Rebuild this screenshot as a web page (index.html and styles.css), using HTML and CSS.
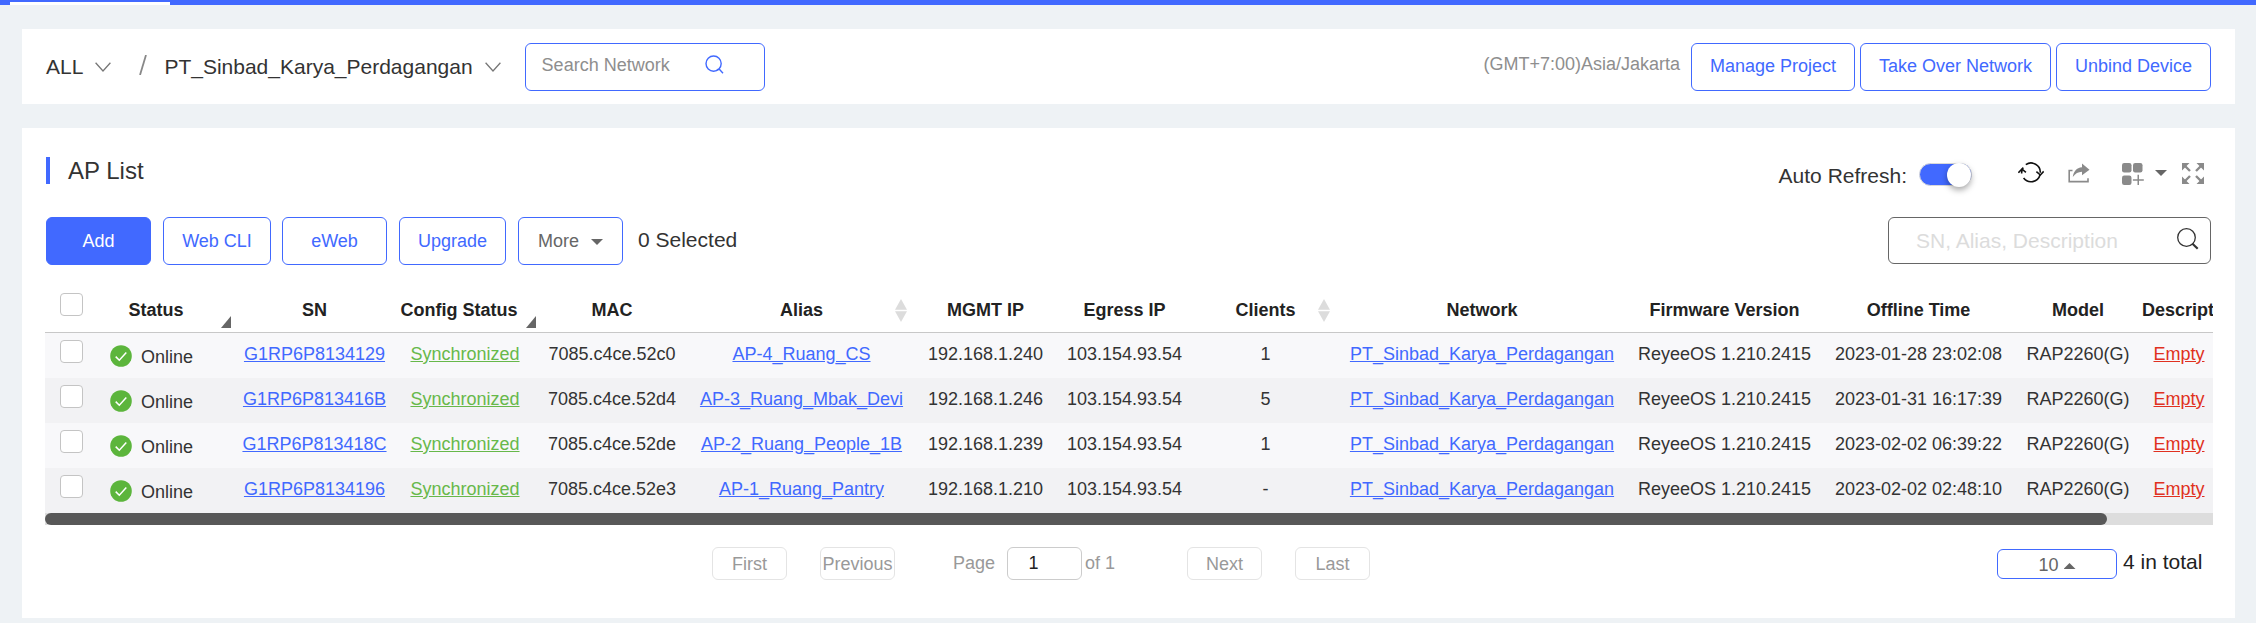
FILE: index.html
```html
<!DOCTYPE html>
<html lang="en">
<head>
<meta charset="utf-8">
<title>AP List</title>
<link rel="stylesheet" href="styles.css">
</head>
<body>
<div class="topbar"><div class="tab"></div></div>
<header class="panel nav">
  <span class="crumb crumb-all">ALL</span>
  <svg class="chev chev-all" viewBox="0 0 16 10"><path d="M.6.8 8 9 15.4.8"/></svg>
  <svg class="slash" viewBox="0 0 8 20"><path d="M7 0 1 20"/></svg>
  <span class="crumb">PT_Sinbad_Karya_Perdagangan</span>
  <svg class="chev chev-net" viewBox="0 0 16 10"><path d="M.6.8 8 9 15.4.8"/></svg>
  <div class="net-search"><span>Search Network</span>
    <svg viewBox="0 0 20 20"><circle cx="8.6" cy="8.6" r="7.6"/><path d="m11.800 14.800 2.600-.6 3.600 4"/></svg>
  </div>
  <div class="nav-right">
    <span class="tz">(GMT+7:00)Asia/Jakarta</span>
    <button class="btn w164">Manage Project</button>
    <button class="btn w191">Take Over Network</button>
    <button class="btn w155">Unbind Device</button>
  </div>
</header>
<main class="panel main">
  <div class="title-row">
    <i class="accent"></i><h1>AP List</h1>
    <div class="tools">
      <span class="auto">Auto Refresh:</span>
      <span class="toggle"><i></i></span>
      <svg class="ic-refresh" viewBox="0 0 26 21"><path d="M3.700 11.500A9.300 9.300 0 0 1 5.200 5.500M7.800 2.600A9.300 9.300 0 0 1 22.300 10.800M22 13A9.300 9.300 0 0 1 5.600 16"/><path d="M.4 10.800 3.900 7l4 3.400M18.400 9.600l4 3.400L25.700 9.400"/></svg>
      <svg class="ic-share" viewBox="0 0 22 20"><path class="line" d="M4.500 7.500H1.200V18.600H20V15.200"/><path d="M14 .5 21.500 6.800 14 12.300V8.800C10 9 7.500 10.500 4.800 14 5.500 8.500 8.500 4.600 14 4.200Z"/></svg>
      <svg class="ic-grid" viewBox="0 0 22 22"><rect width="9.500" height="9.500" rx="2.200"/><rect x="11" width="9.500" height="9.500" rx="2.200"/><rect y="12.500" width="9.500" height="9.500" rx="2.200"/><path d="M15.500 11.800h1.500v4.500h4.800v1.500h-4.800v4.400h-1.500v-4.400h-4.600v-1.500h4.600z"/></svg>
      <i class="caret caret-tools"></i>
      <svg class="ic-expand" viewBox="0 0 22 21"><path d="M0 0h7.500L0 7.500zM22 0v7.500L14.500 0zM0 21v-7.500L7.500 21zM22 21h-7.500L22 13.500z"/><path class="line" d="m2 2 6 6M20 2l-6 6M2 19l6-6M20 19l-6-6"/></svg>
    </div>
  </div>
  <div class="actions">
    <button class="btn primary w105">Add</button>
    <button class="btn w108">Web CLI</button>
    <button class="btn w105">eWeb</button>
    <button class="btn w107">Upgrade</button>
    <button class="btn more w105">More<i class="caret"></i></button>
    <span class="selected">0 Selected</span>
    <div class="search"><span>SN, Alias, Description</span>
      <svg viewBox="0 0 22 22"><circle cx="9.500" cy="9.500" r="8.800"/><path class="handle" d="m15.500 15.800 5.200 5"/></svg>
    </div>
  </div>
  <div class="table-wrap">
    <table class="grid">
      <colgroup><col class="c40"><col class="c146"><col class="c167"><col class="c138"><col class="c152"><col class="c227"><col class="c141"><col class="c137"><col class="c145"><col class="c288"><col class="c197"><col class="c191"><col class="c128"><col class="c74"></colgroup>
      <thead><tr>
        <th><i class="check"></i></th>
        <th class="st">Status<i class="filter"></i></th>
        <th>SN</th>
        <th class="cfg">Config Status<i class="filter"></i></th>
        <th>MAC</th>
        <th>Alias<i class="sort"></i></th>
        <th>MGMT IP</th><th>Egress IP</th>
        <th>Clients<i class="sort"></i></th>
        <th>Network</th><th>Firmware Version</th><th>Offline Time</th><th>Model</th><th class="desc">Description</th>
      </tr></thead>
      <tbody>
        <tr><td><i class="check"></i></td><td><div class="status"><svg viewBox="0 0 22 22"><circle cx="11" cy="11" r="10.800"/><path d="m5.700 11.600 3.600 3.600 7-7.600"/></svg>Online</div></td><td><a>G1RP6P8134129</a></td><td class="sync"><a class="ok">Synchronized</a></td><td>7085.c4ce.52c0</td><td><a>AP-4_Ruang_CS</a></td><td>192.168.1.240</td><td>103.154.93.54</td><td>1</td><td><a>PT_Sinbad_Karya_Perdagangan</a></td><td>ReyeeOS 1.210.2415</td><td>2023-01-28 23:02:08</td><td>RAP2260(G)</td><td><a class="empty">Empty</a></td></tr>
        <tr><td><i class="check"></i></td><td><div class="status"><svg viewBox="0 0 22 22"><circle cx="11" cy="11" r="10.800"/><path d="m5.700 11.600 3.600 3.600 7-7.600"/></svg>Online</div></td><td><a>G1RP6P813416B</a></td><td class="sync"><a class="ok">Synchronized</a></td><td>7085.c4ce.52d4</td><td><a>AP-3_Ruang_Mbak_Devi</a></td><td>192.168.1.246</td><td>103.154.93.54</td><td>5</td><td><a>PT_Sinbad_Karya_Perdagangan</a></td><td>ReyeeOS 1.210.2415</td><td>2023-01-31 16:17:39</td><td>RAP2260(G)</td><td><a class="empty">Empty</a></td></tr>
        <tr><td><i class="check"></i></td><td><div class="status"><svg viewBox="0 0 22 22"><circle cx="11" cy="11" r="10.800"/><path d="m5.700 11.600 3.600 3.600 7-7.600"/></svg>Online</div></td><td><a>G1RP6P813418C</a></td><td class="sync"><a class="ok">Synchronized</a></td><td>7085.c4ce.52de</td><td><a>AP-2_Ruang_People_1B</a></td><td>192.168.1.239</td><td>103.154.93.54</td><td>1</td><td><a>PT_Sinbad_Karya_Perdagangan</a></td><td>ReyeeOS 1.210.2415</td><td>2023-02-02 06:39:22</td><td>RAP2260(G)</td><td><a class="empty">Empty</a></td></tr>
        <tr><td><i class="check"></i></td><td><div class="status"><svg viewBox="0 0 22 22"><circle cx="11" cy="11" r="10.800"/><path d="m5.700 11.600 3.600 3.600 7-7.600"/></svg>Online</div></td><td><a>G1RP6P8134196</a></td><td class="sync"><a class="ok">Synchronized</a></td><td>7085.c4ce.52e3</td><td><a>AP-1_Ruang_Pantry</a></td><td>192.168.1.210</td><td>103.154.93.54</td><td>-</td><td><a>PT_Sinbad_Karya_Perdagangan</a></td><td>ReyeeOS 1.210.2415</td><td>2023-02-02 02:48:10</td><td>RAP2260(G)</td><td><a class="empty">Empty</a></td></tr>
      </tbody>
    </table>
    <div class="track"><div class="thumb"></div></div>
  </div>
  <footer class="pager">
    <span class="pg">First</span>
    <span class="pg pg-prev">Previous</span>
    <span class="label">Page</span>
    <span class="pg-input">1</span>
    <span class="of">of 1</span>
    <span class="pg pg-next">Next</span>
    <span class="pg pg-last">Last</span>
    <span class="size">10<i class="caret up"></i></span>
    <span class="total">4 in total</span>
  </footer>
</main>
</body>
</html>
```
FILE: styles.css
```css
* { box-sizing: border-box; }
body {
  margin: 0;
  width: 2256px;
  height: 623px;
  overflow: hidden;
  background: #eef2f5;
  font: 18px/24px "Liberation Sans", Arial, sans-serif;
  color: #333;
  white-space: nowrap;
}
svg { display: block; flex: none; fill: none; }
.topbar { height: 5px; background: #4169ff; padding: 2px 0 0 10px; }
.tab { width: 160px; height: 3px; background: #fff; }
.panel { width: 2213px; margin-left: 22px; background: #fff; }

.nav { display: flex; align-items: flex-start; height: 75px; margin-top: 24px; padding: 14px 24px 0; }
.crumb { font-size: 21px; line-height: 48px; }
.chev { width: 16px; height: 10px; margin-top: 19px; stroke: #777; stroke-width: 1.3; }
.chev-all { margin-left: 12px; }
.slash { width: 8px; height: 20px; margin: 12px 17px 0 28px; stroke: #888; stroke-width: 1.8; }
.chev-net { margin-left: 12px; }
.net-search {
  display: flex; width: 240px; height: 48px; margin-left: 24px; padding-left: 16px;
  border: 1px solid #4169ff; border-radius: 6px; color: #8e8e8e; line-height: 42px;
}
.net-search svg { width: 20px; height: 20px; margin: 11px 0 0 35px; stroke: #4169ff; stroke-width: 1.4; }
.nav-right { display: flex; margin-left: auto; }
.tz { color: #8e8e8e; line-height: 43px; margin-right: 11px; }
.btn {
  flex: none; height: 48px; padding: 0; border: 1px solid #4169ff; border-radius: 6px;
  background: #fff; color: #4169ff; font: inherit; line-height: 46px;
}
.nav .btn { line-height: 44px; padding-bottom: 2px; }
.nav .btn + .btn { margin-left: 5px; }
.w164 { width: 164px; } .w191 { width: 191px; } .w155 { width: 155px; }
.w105 { width: 105px; } .w108 { width: 108px; } .w107 { width: 107px; }

.main { height: 490px; margin-top: 24px; padding: 29px 22px 0 23px; }
.title-row { display: flex; height: 27px; padding-left: 1px; }
.accent { width: 4px; height: 27px; background: #4169ff; }
h1 { margin: 0 0 0 18px; font-size: 24px; line-height: 27px; font-weight: 400; }
.tools { display: flex; align-items: flex-start; margin-left: auto; padding-right: 9px; }
.auto { font-size: 21px; line-height: 37px; margin-right: 12px; }
.toggle {
  display: flex; justify-content: flex-end; width: 53px; height: 23px; margin: 6px 46px 0 0;
  border: 1px solid #d9d9d9; border-radius: 12px; background: #4169ff;
}
.toggle i { width: 24px; height: 24px; margin: -1px 0 0; border-radius: 50%; background: #fff; box-shadow: 0 3px 6px rgba(0,0,0,.35); }
.ic-refresh { width: 26px; height: 21px; margin: 5px 24px 0 0; stroke: #111; stroke-width: 1.6; }
.ic-share { width: 22px; height: 20px; margin: 6px 32px 0 0; fill: #8a8a8a; }
.ic-share .line { fill: none; stroke: #8a8a8a; stroke-width: 1.6; }
.ic-grid { width: 22px; height: 22px; margin: 6px 11px 0 0; fill: #8a8a8a; }
.ic-expand { width: 22px; height: 21px; margin-top: 6px; fill: #8a8a8a; }
.ic-expand .line { stroke: #8a8a8a; stroke-width: 2.4; }
.caret { width: 12px; height: 6px; background: #666; clip-path: polygon(0 0, 100% 0, 50% 100%); }
.caret.up { clip-path: polygon(0 100%, 100% 100%, 50% 0); }
.caret-tools { margin: 13px 15px 0 0; }

.actions { display: flex; height: 48px; margin-top: 33px; padding: 0 2px 0 1px; }
.primary { background: #4169ff; color: #fff; }
.actions .btn + .btn { margin-left: 12px; }
.actions .btn:nth-child(3) { margin-left: 11px; }
.more { display: flex; align-items: center; justify-content: center; color: #666; }
.more .caret { margin: 2px 0 0 12px; }
.selected { margin-left: 15px; font-size: 21px; line-height: 46px; }
.search {
  display: flex; width: 323px; height: 47px; margin-left: auto; padding-left: 27px;
  border: 1px solid #666; border-radius: 6px; color: #dcdcdc; font-size: 21px; line-height: 46px;
}
.search svg { width: 22px; height: 22px; margin: 10px 0 0 59px; stroke: #333; stroke-width: 1.3; }
.search .handle { stroke-width: 2.2; }

.table-wrap { width: 2168px; margin-top: 19px; overflow: hidden; }
.grid { width: 2171px; table-layout: fixed; border-collapse: separate; border-spacing: 0; text-align: center; }
.c40 { width: 40px; } .c146 { width: 146px; } .c167 { width: 167px; } .c138 { width: 138px; }
.c152 { width: 152px; } .c227 { width: 227px; } .c141 { width: 141px; } .c137 { width: 137px; }
.c145 { width: 145px; } .c288 { width: 288px; } .c197 { width: 197px; } .c191 { width: 191px; }
.c128 { width: 128px; } .c74 { width: 74px; }
th, td { padding: 0; vertical-align: top; }
th { position: relative; height: 49px; padding-top: 14px; border-bottom: 1px solid #c8c8c8; color: #222; }
td { height: 45px; padding-top: 9px; }
tr:nth-child(odd) td { background: #f8f8fa; }
tr:nth-child(even) td { background: #f2f2f4; }
.check { display: block; width: 23px; height: 23px; margin-left: 15px; border: 1px solid #c4c4c4; border-radius: 4px; background: #fff; }
th:first-child { padding-top: 9px; }
td:first-child { padding-top: 7px; }
.st { padding-right: 4px; }
.cfg { padding-right: 16px; }
.sync { padding-right: 4px; }
.filter { position: absolute; right: 0; bottom: 4px; width: 10px; height: 12px; background: #666; clip-path: polygon(100% 0, 100% 100%, 0 100%); }
.sort {
  position: absolute; right: 8px; top: 15px; width: 12px; height: 23px; background: #dcdcdc;
  clip-path: polygon(50% 0, 100% 47%, 0 47%, 0 53%, 100% 53%, 50% 100%, 0 53%, 0 47%);
}
.desc { text-align: left; }
.status { display: flex; padding: 3px 0 0 25px; }
.status svg { width: 22px; height: 22px; margin-right: 9px; fill: #5cb53c; }
.status path { fill: none; stroke: #fff; stroke-width: 1.5; }
a { color: #4169ff; text-decoration: underline; }
.ok { color: #67b84a; }
.empty { color: #e03020; }
.track { height: 12px; background: #ddd; }
.thumb { width: 2062px; height: 12px; border-radius: 6px; background: #585858; }

.pager { display: flex; align-items: flex-start; height: 33px; margin-top: 22px; padding-left: 667px; color: #999; }
.pg, .pg-input { width: 75px; height: 33px; border: 1px solid #e4e4e4; border-radius: 6px; text-align: center; line-height: 32px; }
.pg-prev { margin-left: 33px; }
.label { margin-left: 58px; line-height: 32px; width: 54px; }
.pg-input { border-color: #ccc; color: #222; padding-right: 22px; line-height: 31px; }
.of { margin-left: 3px; line-height: 32px; width: 102px; }
.pg-last { margin-left: 33px; }
.size {
  display: flex; justify-content: center; width: 120px; height: 30px; margin: 2px 0 0 627px;
  border: 1px solid #4169ff; border-radius: 6px; color: #666; line-height: 30px;
}
.size .caret { margin: 13px 0 0 5px; }
.total { margin-left: 6px; font-size: 21px; line-height: 29px; color: #222; }
```
